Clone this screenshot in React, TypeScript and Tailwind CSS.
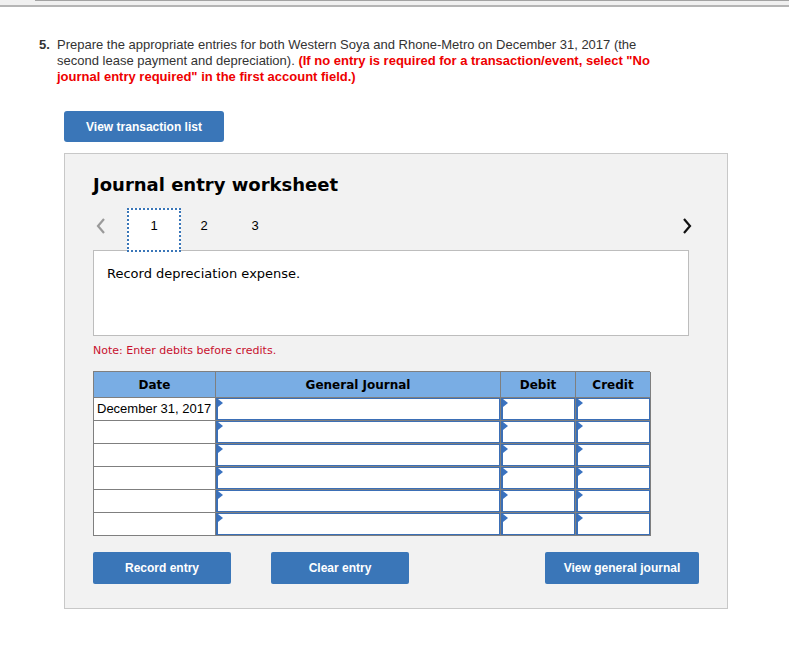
import React from "react";

const arial = { fontFamily: '"Liberation Sans", Arial, sans-serif' };
const verdana = { fontFamily: '"DejaVu Sans", Verdana, sans-serif' };

function Tri() {
  return (
    <svg className="absolute left-0 top-0" width="5" height="8" viewBox="0 0 5 8">
      <polygon points="0,0 5,4 0,8" fill="#3a72c0" />
    </svg>
  );
}

function InputCell() {
  return (
    <div className="border-r border-b border-[#7f7f7f] h-[23px] p-0">
      <div className="relative h-full w-full bg-white border border-[#3b6fb6] border-l-2">
        <Tri />
      </div>
    </div>
  );
}

export default function App() {
  const rows = [0, 1, 2, 3, 4, 5];
  return (
    <div className="w-[789px] h-[648px] bg-white relative overflow-hidden" style={arial}>
      <div className="h-[7px] bg-[#f0f0f0] border-b-2 border-[#b5b5b5]">
        <div className="ml-[35px] border-t border-[#a3a3a3]" />
      </div>

      <div className="mt-[30px] pl-[39px] flex text-[13px] leading-[16px] text-[#333]">
        <div className="w-[18px] shrink-0 font-bold text-[#333]">5.</div>
        <div className="w-[620px]">
          Prepare the appropriate entries for both Western Soya and Rhone-Metro on December 31, 2017 (the
          second lease payment and depreciation).{" "}
          <span className="font-bold text-[#ee0000]">
            (If no entry is required for a transaction/event, select "No journal entry required" in the first account field.)
          </span>
        </div>
      </div>

      <div className="pl-[64px] mt-[26px]">
        <button className="w-[160px] h-[31px] rounded-[3px] bg-[#3a76b8] text-white text-[12px] font-bold" style={arial}>
          View transaction list
        </button>
      </div>

      <div className="ml-[64px] mt-[11px] w-[664px] h-[456px] bg-[#f2f2f2] border border-[#c8c8c8] pl-[28px] pr-[38px]">
        <div className="mt-[19px] text-[18px] leading-[24px] font-bold text-black" style={verdana}>
          Journal entry worksheet
        </div>

        <div className="mt-[11px] flex items-end h-[32px] relative z-10">
          <div className="w-[34px] h-[32px] flex items-center justify-start pl-[3px] pt-[3px]">
            <svg width="10" height="16" viewBox="0 0 10 16">
              <polyline points="8,1 2,8 8,15" fill="none" stroke="#9a9a9a" strokeWidth="2.2" />
            </svg>
          </div>
          <div className="w-[54px] h-[44px] border-2 border-dotted border-[#3a76b8] bg-white -mb-[12px] flex items-start justify-center pt-[8px]">
            <div className="text-[13px] text-black leading-[16px]">1</div>
          </div>
          <div className="w-[46px] h-[32px] flex items-center justify-center text-[13px] text-black pt-[3px]">2</div>
          <div className="w-[56px] h-[32px] flex items-center justify-center text-[13px] text-black pt-[3px]">3</div>
          <div className="flex-1" />
          <div className="w-[14px] h-[32px] flex items-center -mr-[7px] pt-[3px]">
            <svg width="10" height="16" viewBox="0 0 10 16">
              <polyline points="2,1 8,8 2,15" fill="none" stroke="#111" strokeWidth="2.2" />
            </svg>
          </div>
        </div>

        <div className="mt-[10px] w-[596px] h-[86px] bg-white border border-[#bdbdbd] px-[13px] pt-[13px] text-[13px] text-black" style={verdana}>
          Record depreciation expense.
        </div>

        <div className="mt-[8px] text-[11px] leading-[14px] text-[#c8102e]" style={verdana}>
          Note: Enter debits before credits.
        </div>

        <div className="mt-[13px] grid grid-cols-[122px_285px_75px_75px] border-l border-t border-[#7f7f7f] w-[557px]">
          {["Date", "General Journal", "Debit", "Credit"].map((h) => (
            <div
              key={h}
              className="h-[26px] bg-[#79ade4] border-r border-b border-[#7f7f7f] flex items-center justify-center text-[12px] font-bold text-black"
              style={verdana}
            >
              {h}
            </div>
          ))}
          {rows.map((r) => (
            <React.Fragment key={r}>
              <div className="h-[23px] bg-white border-r border-b border-[#7f7f7f] flex items-center pl-[3px] text-[13px] text-black whitespace-nowrap">
                {r === 0 ? "December 31, 2017" : ""}
              </div>
              <InputCell />
              <InputCell />
              <InputCell />
            </React.Fragment>
          ))}
        </div>

        <div className="mt-[16px] flex items-center">
          <button className="w-[138px] h-[32px] rounded-[2px] bg-[#3a76b8] text-white text-[12px] font-bold" style={arial}>
            Record entry
          </button>
          <button className="ml-[40px] w-[138px] h-[32px] rounded-[2px] bg-[#3a76b8] text-white text-[12px] font-bold" style={arial}>
            Clear entry
          </button>
          <div className="flex-1" />
          <button className="w-[154px] h-[32px] rounded-[2px] bg-[#3a76b8] text-white text-[12px] font-bold -mr-[10px]" style={arial}>
            View general journal
          </button>
        </div>
      </div>
    </div>
  );
}
